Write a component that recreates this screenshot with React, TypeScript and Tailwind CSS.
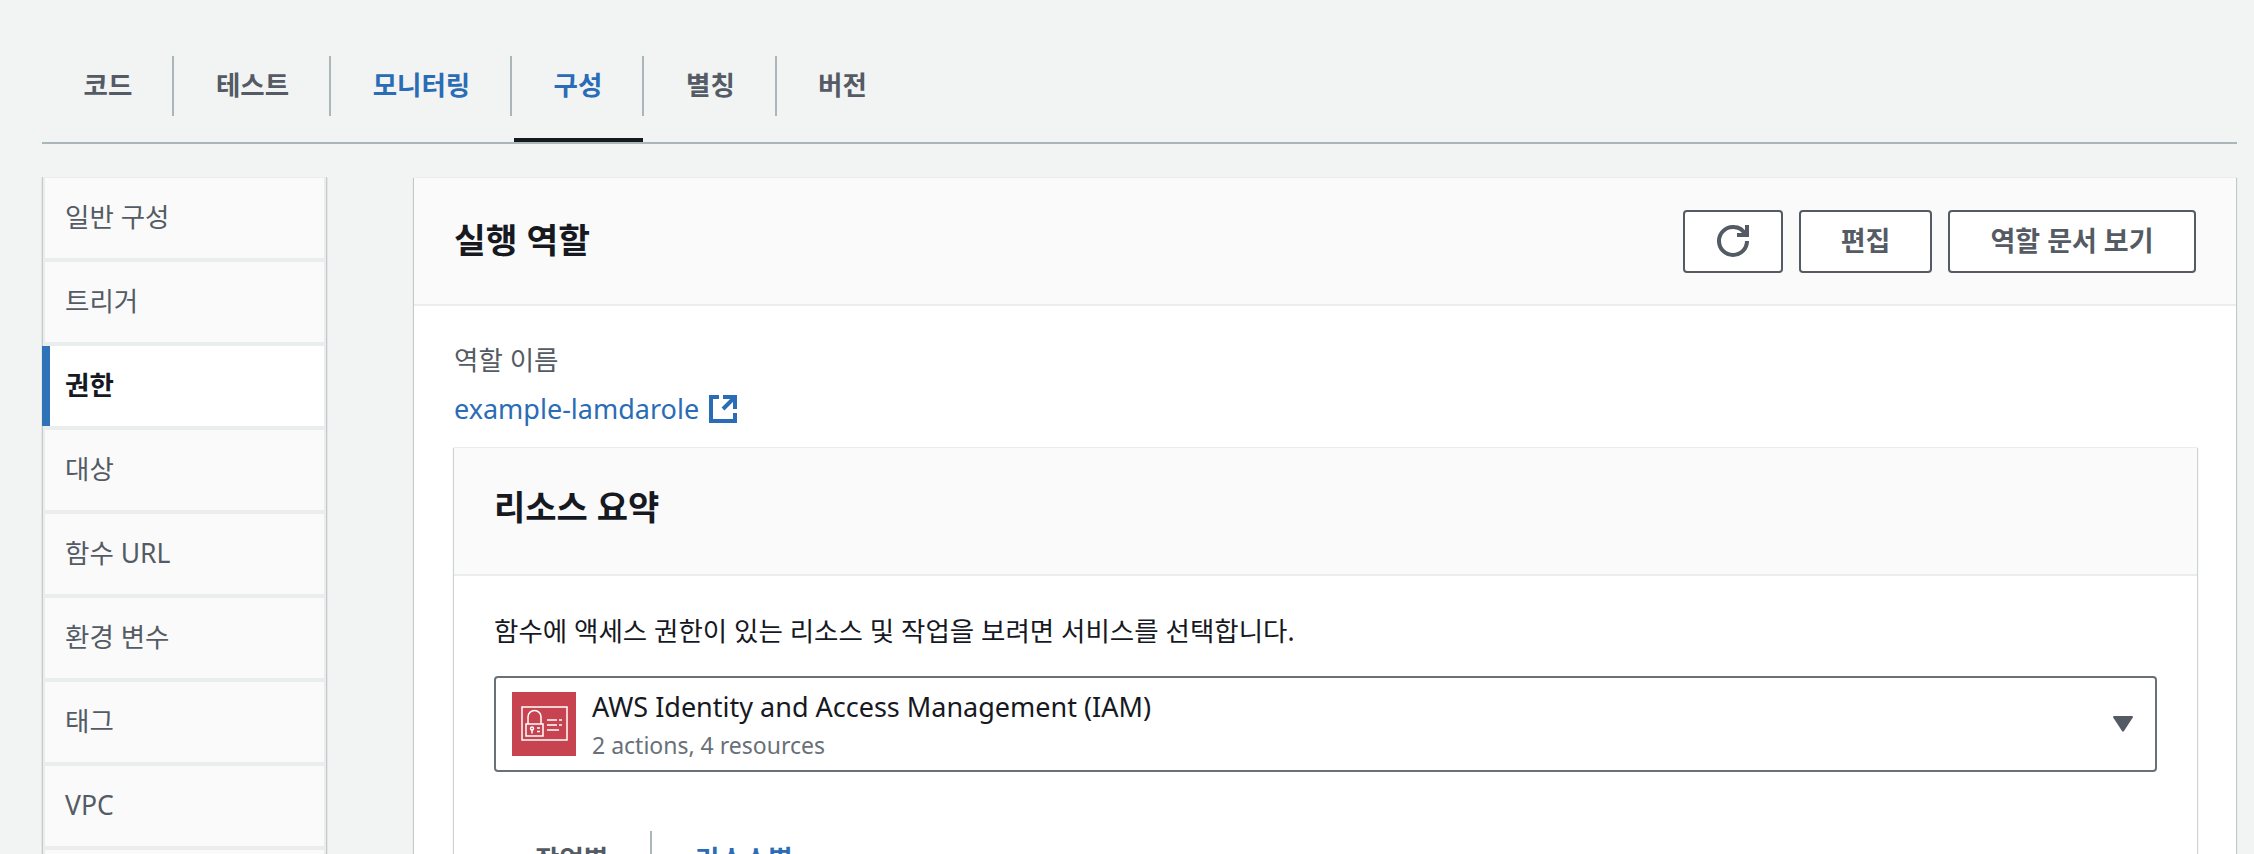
const tabs = [
  { label: "코드", color: "text-[#545b64]", cls: "w-[132px]" },
  { label: "테스트", color: "text-[#545b64]", cls: "w-[157px]" },
  { label: "모니터링", color: "text-[#2a6cb5]", cls: "w-[181px]" },
  { label: "구성", color: "text-[#2a6cb5]", cls: "w-[132px]", active: true },
  { label: "별칭", color: "text-[#545b64]", cls: "w-[133px]" },
  { label: "버전", color: "text-[#545b64]", cls: "w-[131px]", last: true },
];

const sideItems = ["일반 구성", "트리거", "권한", "대상", "함수 URL", "환경 변수", "태그", "VPC", ""];

function RefreshIcon() {
  return (
    <svg width="32" height="32" viewBox="0 0 16 16" fill="none" stroke="#545b64" strokeWidth="2">
      <path d="M10 5h5V0" />
      <path d="M15 8a6.957 6.957 0 0 1-7 7 6.957 6.957 0 0 1-7-7 6.957 6.957 0 0 1 7-7 6.87 6.87 0 0 1 6.3 4" />
    </svg>
  );
}

function ExternalIcon() {
  return (
    <svg width="32" height="32" viewBox="0 0 16 16" fill="none" stroke="#2a6cb5" strokeWidth="2">
      <path d="M14 8.01v-6H8M14.02 2 8 8.01M6 2.01H2v12h12v-3.99" />
    </svg>
  );
}

function IamIcon() {
  return (
    <div className="w-16 h-16 shrink-0 bg-[#c7434f] flex items-center justify-center">
      <svg width="64" height="64" viewBox="0 0 64 64" fill="none" stroke="#fff" strokeWidth="1.5">
        <rect x="10" y="15" width="45" height="33" />
        <rect x="14" y="32" width="17" height="12" />
        <path d="M16 32v-7a6.5 6.5 0 0 1 13 0v7" />
        <circle cx="20" cy="36.5" r="1.5" />
        <path d="M20 38v3.5M25 36h3M25 39.5h3" />
        <path d="M35 28h10M47 28h3M35 33h10M47 33h3M35 38h12" />
      </svg>
    </div>
  );
}

function OutlineButton({ children, cls }: { children: React.ReactNode; cls: string }) {
  return (
    <button className={`h-[63px] border-2 border-[#545b64] rounded-[4px] bg-white flex items-center justify-center text-[27px] font-bold text-[#545b64] ${cls}`}>
      {children}
    </button>
  );
}

export default function App() {
  return (
    <div className="w-[2254px] h-[854px] overflow-hidden bg-[#f2f3f3] pl-[42px] pr-[17px] pt-[56px] font-['Noto_Sans','Noto_Sans_CJK_KR',sans-serif]">
      <div className="flex h-[88px] border-b-2 border-[#aab7b8]">
        {tabs.map((t) => (
          <div key={t.label} className={`h-[86px] ${t.cls} relative`}>
            <div className={`h-[60px] flex items-center justify-center text-[26.5px] font-bold ${t.color} ${t.last ? "" : "pl-[2px] border-r-2 border-[#aab7b8]"}`}>
              {t.label}
            </div>
            {t.active && <div className="absolute left-[2px] right-[1px] bottom-0 h-1 bg-[#16191f]" />}
          </div>
        ))}
      </div>

      <div className="flex mt-[33px] items-start">
        <div className="w-[285px] shrink-0 bg-[#eaeded] px-[2px] pt-px flex flex-col gap-1 border-x border-[#c5cbcb] shadow-[0_1px_1px_0_rgba(0,28,36,0.3)]">
          {sideItems.map((item) =>
            item === "권한" ? (
              <div key={item} className="h-20 -ml-[3px] bg-white border-l-8 border-[#2e73b8] pl-[15px] flex items-center text-[26.5px] font-bold text-[#16191f]">
                {item}
              </div>
            ) : (
              <div key={item} className="h-20 bg-[#fafafa] pl-5 flex items-center text-[26.5px] text-[#545b64]">
                {item}
              </div>
            )
          )}
        </div>

        <div className="ml-[87px] w-[1822px] bg-white border-t border-[#eaeded] shadow-[0_1px_1px_0_rgba(0,28,36,0.3),1px_1px_1px_0_rgba(0,28,36,0.15),-1px_1px_1px_0_rgba(0,28,36,0.15)]">
          <div className="h-[128px] bg-[#fafafa] border-b-2 border-[#eaeded] flex items-center justify-between pl-10 pr-10">
            <h2 className="text-[34.5px] font-bold text-[#16191f] pb-[2px]">실행 역할</h2>
            <div className="flex gap-4">
              <OutlineButton cls="w-[100px]">
                <RefreshIcon />
              </OutlineButton>
              <OutlineButton cls="w-[133px]">편집</OutlineButton>
              <OutlineButton cls="w-[248px]">역할 문서 보기</OutlineButton>
            </div>
          </div>

          <div className="px-10 pt-[36px]">
            <div className="text-[26.5px] leading-[36px] text-[#545b64]">역할 이름</div>
            <div className="mt-[13px] flex items-center gap-2 text-[27px] leading-[36px] text-[#2a6cb5]">
              example-lamdarole
              <ExternalIcon />
            </div>

            <div className="mt-[20px] w-[1743px] border-t border-[#eaeded] shadow-[0_1px_1px_0_rgba(0,28,36,0.3),1px_1px_1px_0_rgba(0,28,36,0.15),-1px_1px_1px_0_rgba(0,28,36,0.15)]">
              <div className="h-[128px] bg-[#fafafa] border-b-2 border-[#eaeded] flex items-center pl-10 pb-[8px]">
                <h3 className="text-[34px] font-bold text-[#16191f]">리소스 요약</h3>
              </div>
              <div className="px-10 pt-[37px] h-[300px]">
                <p className="text-[26.5px] leading-[36px] text-[#16191f]">
                  함수에 액세스 권한이 있는 리소스 및 작업을 보려면 서비스를 선택합니다.
                </p>
                <div className="mt-[27px] h-[96px] border-2 border-[#687078] rounded-[4px] flex items-center pl-[16px] pr-[22px]">
                  <IamIcon />
                  <div className="ml-4 flex-1">
                    <div className="text-[27px] leading-[34px] text-[#16191f]">AWS Identity and Access Management (IAM)</div>
                    <div className="text-[23px] leading-[30px] mt-[6px] -mb-[2px] text-[#687078]">2 actions, 4 resources</div>
                  </div>
                  <svg width="20" height="16" viewBox="0 0 20 16" fill="#545b64">
                    <path d="M1 0h18a1 1 0 0 1 .8 1.6L11 15a1.2 1.2 0 0 1-2 0L.2 1.6A1 1 0 0 1 1 0z" />
                  </svg>
                </div>
                <div className="flex mt-[59px]">
                  <div className="w-[115px] pl-[41px] h-[60px] pt-[10px] border-r-2 border-[#aab7b8] text-[26.5px] font-bold text-[#545b64] leading-[36px] box-content">작업별</div>
                  <div className="pl-[43px] pt-[10px] text-[26.5px] font-bold text-[#2a6cb5] leading-[36px]">리소스별</div>
                </div>
              </div>
            </div>
          </div>
        </div>
      </div>
    </div>
  );
}
